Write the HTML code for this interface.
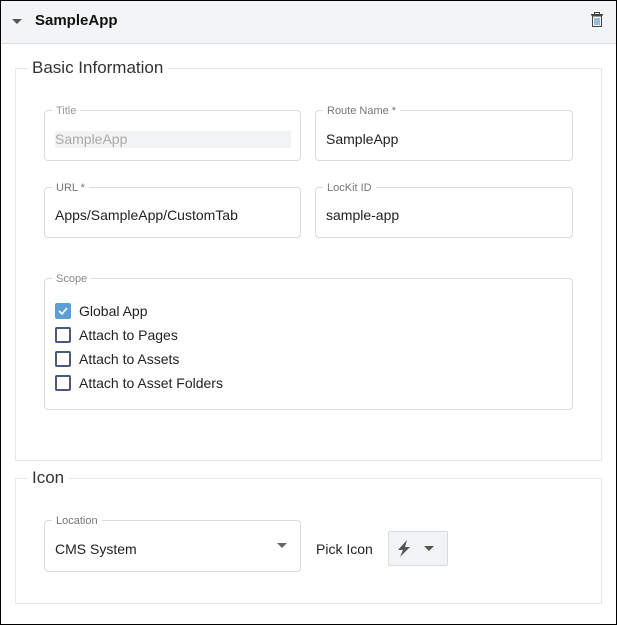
<!DOCTYPE html>
<html><head><style>
*{box-sizing:border-box;margin:0;padding:0}
body{width:617px;height:625px;position:relative;font-family:"Liberation Sans",sans-serif;background:#fff;overflow:hidden}
.frame{position:absolute;left:0;top:0;width:617px;height:625px;border:1px solid #000}
.hdr{position:absolute;left:1px;top:1px;width:615px;height:43px;background:#f3f4f6;border-bottom:1px solid #d8dadf}
.a{position:absolute}
.fs{position:absolute;border:1px solid #e6e8eb}
.leg{position:absolute;background:#fff;padding:0 4px;color:#333;font-size:17px}
.box{position:absolute;border:1px solid #d9dbde;border-radius:4px}
.lab{position:absolute;top:-5px;left:7px;background:#fff;padding:0 4px;font-size:11px;color:#777;line-height:10px}
.val{position:absolute;left:10px;font-size:14px;color:#222}
.cb{position:absolute;left:55px;width:16px;height:16px;border:2px solid #4a5a78;border-radius:2px}
.ct{position:absolute;left:79px;font-size:14px;color:#222}
</style></head><body>
<div class="frame"></div>
<div class="hdr"></div>
<div class="a" style="left:12px;top:19px;width:0;height:0;border-left:5px solid transparent;border-right:5px solid transparent;border-top:5px solid #555"></div>
<div class="a" style="left:35px;top:12px;font-size:15px;font-weight:bold;color:#111">SampleApp</div>
<svg class="a" style="left:591px;top:12px" width="12" height="15" viewBox="0 0 12 15"><rect x="3.5" y="0.5" width="5" height="2" fill="none" stroke="#444"/><rect x="0" y="2" width="12" height="1.5" fill="#444"/><rect x="1.5" y="4" width="9" height="10.5" fill="none" stroke="#444"/><path d="M4 6v7M6 6v7M8 6v7" stroke="#3a7fc0"/></svg>

<div class="fs" style="left:15px;top:68px;width:587px;height:393px"></div>
<div class="leg" style="left:28px;top:58px">Basic Information</div>

<div class="box" style="left:44px;top:110px;width:257px;height:51px"><div class="lab" style="color:#999">Title</div><div class="a" style="left:10px;top:20px;width:236px;height:17px;background:#f2f3f5"></div><div class="val" style="top:20px;color:#aaa">SampleApp</div></div>
<div class="box" style="left:315px;top:110px;width:258px;height:51px"><div class="lab">Route Name *</div><div class="val" style="top:20px">SampleApp</div></div>
<div class="box" style="left:44px;top:187px;width:257px;height:51px"><div class="lab">URL *</div><div class="val" style="top:19px">Apps/SampleApp/CustomTab</div></div>
<div class="box" style="left:315px;top:187px;width:258px;height:51px"><div class="lab">LocKit ID</div><div class="val" style="top:19px">sample-app</div></div>

<div class="box" style="left:44px;top:278px;width:529px;height:132px"><div class="lab" style="color:#888">Scope</div></div>
<div class="cb" style="top:303px;background:#5a9fd6;border-color:#5a9fd6"><svg width="12" height="12" style="position:absolute;left:0;top:0"><path d="M2 6l3 3 5-6" stroke="#fff" stroke-width="1.6" fill="none"/></svg></div>
<div class="ct" style="top:303px">Global App</div>
<div class="cb" style="top:327px"></div><div class="ct" style="top:327px">Attach to Pages</div>
<div class="cb" style="top:351px"></div><div class="ct" style="top:351px">Attach to Assets</div>
<div class="cb" style="top:375px"></div><div class="ct" style="top:375px">Attach to Asset Folders</div>

<div class="fs" style="left:15px;top:478px;width:587px;height:126px"></div>
<div class="leg" style="left:28px;top:468px">Icon</div>
<div class="box" style="left:44px;top:520px;width:257px;height:52px"><div class="lab">Location</div><div class="val" style="top:20px">CMS System</div><div class="a" style="right:13px;top:22px;border-left:5px solid transparent;border-right:5px solid transparent;border-top:5px solid #666"></div></div>
<div class="a" style="left:316px;top:541px;font-size:14px;color:#222">Pick Icon</div>
<div class="a" style="left:388px;top:531px;width:60px;height:35px;background:#f2f3f5;border:1px solid #d9dbde;border-radius:2px"></div>
<svg class="a" style="left:397px;top:540px" width="14" height="17" viewBox="0 0 14 17"><path d="M10 0L1 10h5l-3 7 10-10H8l2-7z" fill="#555"/></svg>
<div class="a" style="left:424px;top:546px;border-left:5px solid transparent;border-right:5px solid transparent;border-top:5px solid #555"></div>
</body></html>
